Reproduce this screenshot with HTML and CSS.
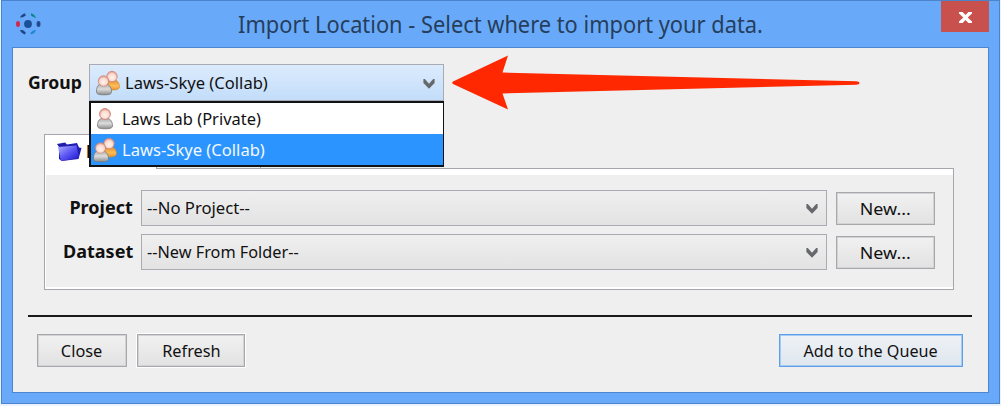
FILE: index.html
```html
<!DOCTYPE html>
<html lang="en">
<head>
<meta charset="utf-8">
<title>Import Location</title>
<link rel="stylesheet" href="styles.css">
</head>
<body>
<svg class="defs" width="0" height="0" aria-hidden="true">
  <defs>
    <radialGradient id="skin" cx=".5" cy=".6" r=".6"><stop offset="0" stop-color="#fff2ec"/><stop offset=".6" stop-color="#fadbd1"/><stop offset="1" stop-color="#dc9080"/></radialGradient>
    <linearGradient id="grey" x2="0" y2="1"><stop offset="0" stop-color="#a8a8a8"/><stop offset=".5" stop-color="#dcdcdc"/><stop offset="1" stop-color="#8c8c8c"/></linearGradient>
    <linearGradient id="gold" x2="0" y2="1"><stop offset="0" stop-color="#d58a35"/><stop offset=".6" stop-color="#ffbd55"/><stop offset="1" stop-color="#e59532"/></linearGradient>
    <linearGradient id="folder" x2="1" y2="1"><stop offset="0" stop-color="#b3b3ff"/><stop offset=".5" stop-color="#5a55f2"/><stop offset="1" stop-color="#1a12c8"/></linearGradient>
    <symbol id="pair" viewBox="0 0 26 26">
      <path d="M12.500 19v-4c0-4 2-5.500 5.500-5.500s6.500 2.500 6.500 7.500c0 2-3 3-6 3s-6 0-6-1z" fill="url(#gold)" stroke="#c98330" stroke-width=".6"/>
      <circle cx="17" cy="6.500" r="5.200" fill="url(#skin)" stroke="#cf8578" stroke-width=".8"/>
      <path d="M1.500 22c0-6 2-8.500 7-8.500s8 3 8 8.500c0 2-2 2.800-7.500 2.800S1.500 24 1.500 22z" fill="url(#grey)" stroke="#777" stroke-width=".8"/>
      <circle cx="8.500" cy="11" r="5.200" fill="url(#skin)" stroke="#cf8578" stroke-width=".8"/>
    </symbol>
    <symbol id="single" viewBox="0 0 18 22">
      <path d="M1.500 18c0-6 2.500-8 7.500-8s7.500 3 7.500 8c0 2-2.500 2.800-7.500 2.800S1.500 20 1.500 18z" fill="url(#grey)" stroke="#777" stroke-width=".8"/>
      <circle cx="9" cy="6" r="5.400" fill="url(#skin)" stroke="#cf7d72" stroke-width=".9"/>
    </symbol>
    <symbol id="chevron" viewBox="0 0 12 10"><path d="M.4 0H1.800L6 4.800 10.200 0h1.400v4L6 9.800 .4 4z" fill="#66686b"/></symbol>
  </defs>
</svg>
<div class="window">
  <header class="titlebar">
    <svg class="app-icon" viewBox="0 0 26 24">
      <circle cx="13" cy="12" r="3.900" fill="#1b4f96"/>
      <ellipse cx="3" cy="12" rx="2" ry="3" fill="#d2274b"/>
      <ellipse cx="23.500" cy="12" rx="2" ry="3" fill="#234a8c"/>
      <path d="M5 5.500Q6 2.500 10 1.200L10.800 3.500 7.800 5.200z" fill="#1f4784"/>
      <path d="M16 1.200Q20 2.500 21 6L18.400 5 16 3.500z" fill="#0c8684"/>
      <path d="M5 18Q6 21 10 22.500L10.800 20.500 7.800 18z" fill="#1f4784"/>
      <path d="M16 22.500Q20 21.500 21 18L18.400 18.400 15.600 20.500z" fill="#1f85d6"/>
    </svg>
    <h1 class="title"><span class="t-title">Import Location - Select where to import your data.</span></h1>
    <button class="close-x" aria-label="Close window"><svg viewBox="0 0 13 11"><path d="M0 0h3.600l2.900 3L9.400 0H13v1.500L8.700 5.500 13 9.500V11H9.400L6.500 8 3.600 11H0V9.500L4.300 5.500 0 1.500z" fill="#fff"/></svg></button>
  </header>
  <main class="content">
    <div class="group-row">
      <label class="label"><span class="t-group">Group</span></label>
      <div class="combo group-combo">
        <svg class="pair"><use href="#pair"/></svg>
        <span class="t-collab">Laws-Skye (Collab)</span>
        <svg class="chevron"><use href="#chevron"/></svg>
        <div class="menu">
          <div class="option"><svg class="single"><use href="#single"/></svg><span class="t-private">Laws Lab (Private)</span></div>
          <div class="option selected"><svg class="pair"><use href="#pair"/></svg><span class="t-collab">Laws-Skye (Collab)</span></div>
        </div>
      </div>
      <svg class="arrow" viewBox="0 0 410 56"><path d="M1 26.500Q-.5 27.500 1 29L56 54.500 50.500 38.500 404 29.800Q407.500 29.500 407.500 28T404 26.200L50.500 17.500 56 .5z" fill="#ff2800"/></svg>
    </div>
    <div class="tabs">
      <div class="tab"><svg class="folder" viewBox="0 0 25 20"><path d="M2 5L0 2 8 .5l2 2L20 1l2 4.500 2.500.5-3 11L5 19 2 17z" fill="#201cae"/><path d="M1 5L19.500 3.500 22 16 4 19z" fill="url(#folder)"/></svg><span class="label">P</span></div>
      <div class="tab-rest"></div>
      <div class="tab-line"></div>
    </div>
    <section class="panel">
      <label class="label"><span class="t-bold">Project</span></label>
      <div class="combo"><span class="t-nop">--No Project--</span><svg class="chevron"><use href="#chevron"/></svg></div>
      <button class="btn"><span class="t-new">New...</span></button>
      <label class="label"><span class="t-bold">Dataset</span></label>
      <div class="combo"><span class="t-nff">--New From Folder--</span><svg class="chevron"><use href="#chevron"/></svg></div>
      <button class="btn"><span class="t-new">New...</span></button>
    </section>
    <footer class="footer">
      <button class="btn close"><span class="t-close">Close</span></button>
      <button class="btn refresh"><span class="t-close">Refresh</span></button>
      <button class="btn primary"><span class="t-add">Add to the Queue</span></button>
    </footer>
  </main>
</div>
</body>
</html>
```
FILE: styles.css
```css
* { box-sizing: border-box; }
body { margin: 0; width: 1001px; height: 406px; overflow: hidden; background: #e9f2fd; padding: 0 1px 2px; font: 17px/20px "Noto Sans", sans-serif; color: #111; }
.defs { position: absolute; }
svg { display: block; flex: none; }
span { white-space: nowrap; display: inline-block; transform-origin: left center; }
.window { height: 404px; border: 1px solid #4c84cb; background: #68aaf9; padding: 0 10px 11px; }
.titlebar { height: 46px; display: flex; align-items: flex-start; }
.app-icon { width: 26px; height: 24px; margin: 11px 0 0 3px; }
.title { margin: 8px 0 0; flex: 1; font: 400 23px/30px "Noto Sans", sans-serif; color: #263e5c; padding-left: 197px; }
.close-x { width: 48px; height: 31px; border: 0; background: #c8504d; padding: 0; display: flex; align-items: center; justify-content: center; }
.close-x svg { width: 13px; height: 11px; margin-top: 2px; }
.content { height: 346px; border: 1px solid #4d86cf; background: #efefef; padding: 0 16px 0 15px; }
.group-row { display: flex; padding-top: 16px; height: 86px; }
.label { font-weight: 700; }
.group-row .label { width: 61px; padding-top: 9px; }
.combo { height: 36px; border: 1px solid #a9abb2; background: linear-gradient(#efefef, #e3e3e3); display: flex; align-items: center; padding: 0 8px 0 5px; }
.combo .chevron { margin-left: auto; margin-top: 2px; }
.chevron { width: 12px; height: 10px; }
.group-combo { position: relative; width: 355px; height: 37px; background: linear-gradient(#dcebfd, #c2ddfa); }
.group-combo .pair { margin-right: 4px; }
.pair { width: 26px; height: 26px; }
.menu { position: absolute; left: -1px; top: 36px; width: 355px; height: 66px; border: 2px solid #101316; border-right-width: 1px; background: #fff; z-index: 1; }
.option { height: 31px; display: flex; align-items: center; }
.option .single { width: 18px; height: 22px; margin: 0 8px 0 5px; }
.menu .pair { margin-right: 4px; margin-left: 1px; }
.selected { background: #2b94ff; color: #f3f9ff; }
.arrow { width: 410px; height: 56px; margin: -9px 0 0 8px; }
.tabs { display: flex; height: 35px; margin: 0 18px 0 16px; }
.tab { width: 113px; border: 1px solid #a5a7ac; border-bottom: 0; background: #fff; display: flex; padding: 7px 0 0 12px; gap: 4px; }
.folder { width: 25px; height: 20px; }
.tab-rest { width: 104px; border: 1px solid #a5a7ac; border-left: 0; margin-top: 4px; }
.tab-line { flex: 1; border-bottom: 1px solid #a5a7ac; }
.panel { margin: 0 18px 0 16px; height: 121px; border: 1px solid #a5a7ac; border-top: 0; background: linear-gradient(#fff 6px, #efefef 6px); box-shadow: inset 0 -2px #fff, inset 1px 0 #fff; display: grid; grid-template-columns: 96px 686px 108px; grid-template-rows: 36px 36px; gap: 8px 0; padding-top: 21px; }
.panel .label { text-align: right; padding: 8px 8px 0 0; }
.panel .btn { margin: 2px 0 0 9px; }
.btn { font: inherit; color: inherit; width: 99px; height: 33px; padding: 0; border: 1px solid #a6a8ab; box-shadow: inset 0 0 0 1px #d2d3d5; background: linear-gradient(#f1f1f1, #e2e2e2); }
.footer { margin-top: 25px; border-top: 2px solid #1a1a1a; display: flex; padding: 17px 9px 0 9px; }
.footer .close { width: 90px; }
.footer .refresh { width: 108px; margin-left: 10px; box-shadow: inset 0 0 0 1px #d2d3d5, 0 0 0 1px #fff; }
.footer .primary { width: 184px; margin-left: auto; border-color: #5d9fe8; box-shadow: inset 0 0 0 1px #a4cbf4; background: linear-gradient(#eef2f6, #dfe6ee); }

/* Narrow dialog lettering */
.t-title { transform: scaleX(.949); }
.t-group { transform: scaleX(1.035); }
.t-collab { transform: scaleX(.975); }
.t-private { transform: scaleX(.968); }
.t-bold { transform: scaleX(1.06); transform-origin: right center; }
.t-nop { transform: scaleX(.98); }
.t-nff { transform: scaleX(.957); }
.t-new { transform: scaleX(1.05); transform-origin: center; }
.t-close { transform: scaleX(.96); transform-origin: center; }
.t-add { transform: scaleX(.95); transform-origin: center; }
```
